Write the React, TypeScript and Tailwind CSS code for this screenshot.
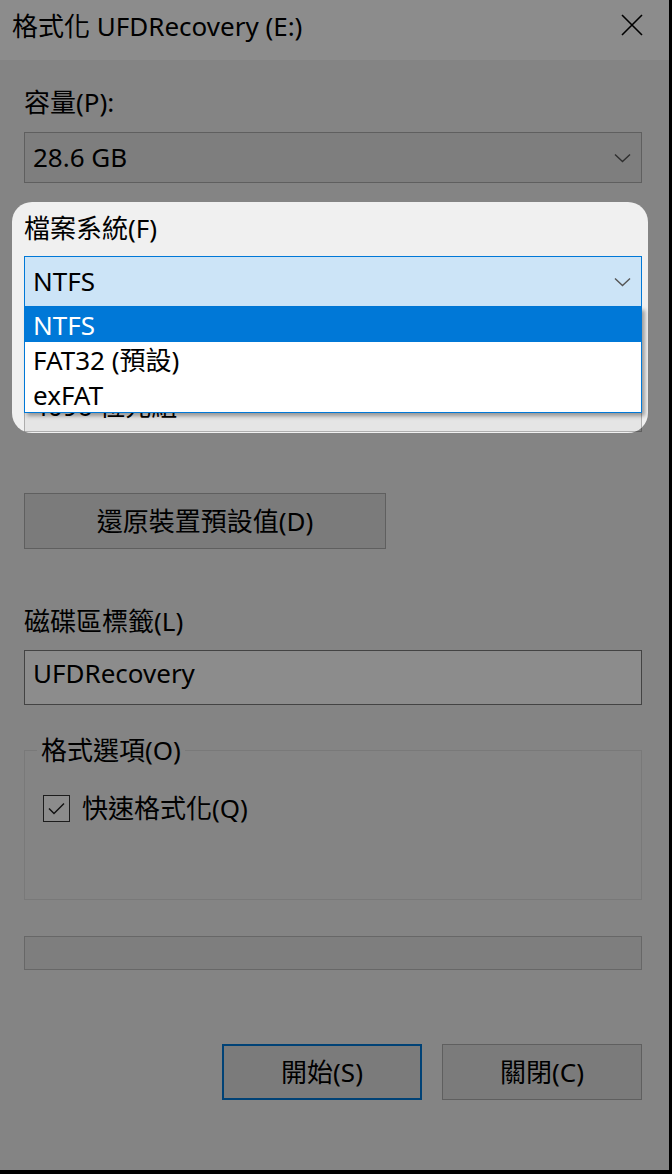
import React from "react";

const font = "font-['Noto_Sans','Noto_Sans_CJK_TC',sans-serif]";

function Chevron() {
  return (
    <svg width="17" height="10" viewBox="0 0 17 10" className="shrink-0">
      <path d="M1 1.5 L8.5 8.5 L16 1.5" fill="none" stroke="#555" strokeWidth="1.4" />
    </svg>
  );
}

function Label({ children }: { children: React.ReactNode }) {
  return <div className="h-9 text-[26px] leading-9 text-black">{children}</div>;
}

function Combo({ value, active }: { value: string; active?: boolean }) {
  return (
    <div
      className={`flex h-[51px] items-center justify-between border pl-2 pr-[10px] text-[26px] text-black ${
        active ? "border-[#0078d7] bg-[#cce4f7]" : "border-[#adadad] bg-[#e5e5e5]"
      }`}
    >
      <span>{value}</span>
      <Chevron />
    </div>
  );
}

const options = ["NTFS", "FAT32 (預設)", "exFAT"];

export default function App() {
  return (
    <div className={`min-h-screen bg-black ${font}`}>
      <div className="relative h-[1170px] w-[669px] overflow-hidden bg-[#f0f0f0]">
        {/* title bar */}
        <div className="flex h-[60px] items-start justify-between bg-white pl-3 pr-[26px] pt-2">
          <span className="text-[26px] leading-9 text-black">格式化 UFDRecovery (E:)</span>
          <svg width="22" height="22" viewBox="0 0 22 22" className="mt-[6px]">
            <path d="M1 1 L21 21 M21 1 L1 21" stroke="#000" strokeWidth="1.6" />
          </svg>
        </div>

        <div className="pl-6 pr-[27px]">
          <div className="mt-6">
            <Label>容量(P):</Label>
          </div>
          <div className="mt-3">
            <Combo value="28.6 GB" />
          </div>

          <div className="mt-[27px]">
            <Label>檔案系統(F)</Label>
          </div>
          <div className="relative z-10 mt-[10px]">
            <Combo value="NTFS" active />
            <ul className="absolute left-0 right-0 top-full border border-t-0 border-[#0078d7] bg-white text-[26px] shadow-[3px_3px_4px_rgba(0,0,0,0.35)]">
              {options.map((o, i) => (
                <li
                  key={o}
                  className={`flex h-[35px] items-center pl-2 leading-none ${
                    i === 0 ? "bg-[#0078d7] text-white" : "text-black"
                  }`}
                >
                  {o}
                </li>
              ))}
            </ul>
          </div>

          <div className="mt-[27px]">
            <Label>配置單位大小(A)</Label>
          </div>
          <div className="mt-[11px]">
            <Combo value="4096 位元組" />
          </div>

          <button className="mt-[61px] flex h-[56px] w-[362px] items-center justify-center border border-[#adadad] bg-[#e1e1e1] text-[26px] text-black">
            還原裝置預設值(D)
          </button>

          <div className="mt-[54px]">
            <Label>磁碟區標籤(L)</Label>
          </div>
          <div className="mt-[11px] flex h-[55px] items-center border border-[#7a7a7a] bg-white pb-2 pl-2 text-[26px] text-black">
            UFDRecovery
          </div>

          <fieldset className="mt-[27px] h-[168px] border border-[#dcdcdc]">
            <legend className="ml-3 px-1 text-[26px] leading-9 text-black">格式選項(O)</legend>
            <label className="ml-[18px] mt-[22px] flex h-9 items-center gap-3 text-[26px] text-black">
              <span className="flex h-[27px] w-[27px] items-center justify-center border border-[#333] bg-white">
                <svg width="17" height="13" viewBox="0 0 17 13">
                  <path d="M1 6.5 L6 11.5 L16 1.5" fill="none" stroke="#222" strokeWidth="1.5" />
                </svg>
              </span>
              快速格式化(Q)
            </label>
          </fieldset>

          <div className="mt-9 h-[34px] border border-[#bcbcbc] bg-[#e6e6e6]" />

          <div className="mt-[74px] flex justify-end gap-5">
            <button className="flex h-[56px] w-[200px] items-center justify-center border-2 border-[#0078d7] bg-[#e1e1e1] text-[26px] text-black">
              開始(S)
            </button>
            <button className="flex h-[56px] w-[200px] items-center justify-center border border-[#adadad] bg-[#e1e1e1] text-[26px] text-black">
              關閉(C)
            </button>
          </div>
        </div>

        {/* dim overlay with spotlight on the file system field */}
        <div className="pointer-events-none absolute left-3 top-[202px] z-20 h-[231px] w-[636px] rounded-[20px] shadow-[0_0_0_2000px_rgba(0,0,0,0.45)]" />
      </div>
    </div>
  );
}
